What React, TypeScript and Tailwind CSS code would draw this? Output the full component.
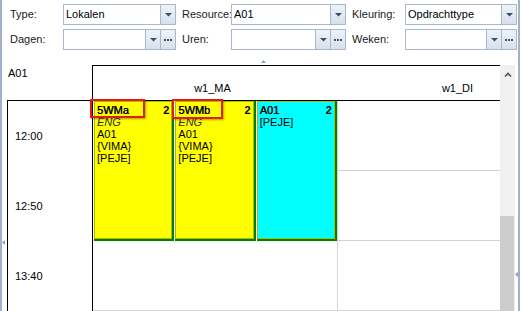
import React from "react";

function Arrow() {
  return (
    <svg width="7" height="4" viewBox="0 0 7 4">
      <polygon points="0,0 7,0 3.5,3.5" fill="#3f4e66" />
    </svg>
  );
}

function Dots() {
  return (
    <svg width="8" height="2" viewBox="0 0 8 2">
      <rect x="0" y="0" width="2" height="2" fill="#44536a" />
      <rect x="3" y="0" width="2" height="2" fill="#44536a" />
      <rect x="6" y="0" width="2" height="2" fill="#44536a" />
    </svg>
  );
}

function Btn({ children }: { children: React.ReactNode }) {
  return (
    <div className="w-[15px] h-full shrink-0 border-l border-[#a9b8cc] bg-gradient-to-b from-[#eef3f9] to-[#d6e0ec] flex items-center justify-center">
      {children}
    </div>
  );
}

function Combo({ w, value, dots }: { w: string; value?: string; dots?: boolean }) {
  return (
    <div className={"h-[21px] shrink-0 border border-[#a9b8cc] bg-white flex " + w}>
      <div className="flex-1 min-w-0 pl-[2px] leading-[19px] whitespace-nowrap overflow-hidden">{value}</div>
      <Btn>
        <Arrow />
      </Btn>
      {dots && (
        <Btn>
          <Dots />
        </Btn>
      )}
    </div>
  );
}

function Label({ w, text }: { w: string; text: string }) {
  return <div className={"shrink-0 leading-[21px] text-[#1a1a1a] " + w}>{text}</div>;
}

function Card({
  bg,
  title,
  lines,
}: {
  bg: string;
  title: string;
  lines: { t: string; i?: boolean }[];
}) {
  return (
    <div className="flex-1 min-w-0 h-full pl-[1px] bg-white">
      <div className="h-full border-r-2 border-b-2 border-[#008000]">
        <div className={"h-full border border-[#aabb00] px-[2px] pt-[2px] leading-[12px] " + bg}>
          <div className="flex justify-between">
            <span className="[text-shadow:0.3px_0_0_#000]">{title}</span>
            <span className="font-bold">2</span>
          </div>
          {lines.map((l, k) => (
            <div key={k} className={l.i ? "italic text-[#333333]" : ""}>
              {l.t}
            </div>
          ))}
        </div>
      </div>
    </div>
  );
}

export default function App() {
  const yellowLines = [{ t: "ENG", i: true }, { t: "A01" }, { t: "{VIMA}" }, { t: "[PEJE]" }];
  return (
    <div className="relative w-[522px] h-[311px] bg-white overflow-hidden font-['Liberation_Sans',Arial,sans-serif] text-[11px] text-black flex">
      <div className="w-[2px] h-full shrink-0 bg-[#9fb1cc]" />
      <div className="w-[516px] shrink-0 flex flex-col">
        {/* filters */}
        <div className="h-[55px] shrink-0 pt-[4px] pl-[8px] flex flex-col gap-[4px]">
          <div className="flex items-center">
            <Label w="w-[53px]" text="Type:" />
            <Combo w="w-[113px]" value="Lokalen" />
            <div className="w-[6px] shrink-0" />
            <Label w="w-[49px]" text="Resource:" />
            <Combo w="w-[115px]" value="A01" />
            <div className="w-[6px] shrink-0" />
            <Label w="w-[53px]" text="Kleuring:" />
            <Combo w="w-[112px]" value="Opdrachttype" />
          </div>
          <div className="flex items-center">
            <Label w="w-[53px]" text="Dagen:" />
            <Combo w="w-[113px]" dots />
            <div className="w-[6px] shrink-0" />
            <Label w="w-[49px]" text="Uren:" />
            <Combo w="w-[115px]" dots />
            <div className="w-[6px] shrink-0" />
            <Label w="w-[53px]" text="Weken:" />
            <Combo w="w-[112px]" dots />
          </div>
        </div>
        {/* splitter */}
        <div className="h-[10px] shrink-0 pl-[259px] pt-[5px]">
          <svg width="5" height="3" viewBox="0 0 5 3" className="block">
            <polygon points="0,3 5,3 2.5,0" fill="#8ea2bf" />
          </svg>
        </div>
        {/* schedule */}
        <div className="flex flex-1 min-h-0">
          <div className="w-[90px] shrink-0 flex flex-col">
            <div className="h-[35px] shrink-0 pl-[6px] pt-[2px] leading-[13px]">A01</div>
            <div className="ml-[5px] flex-1 border-l border-t border-black flex flex-col">
              {["12:00", "12:50", "13:40"].map((t) => (
                <div key={t} className="h-[70px] shrink-0 flex items-center pl-[7px]">
                  {t}
                </div>
              ))}
            </div>
          </div>
          <div className="w-[408px] shrink-0 border-l border-black flex flex-col overflow-hidden">
            <div className="h-[36px] shrink-0 border-t border-b border-black flex overflow-hidden">
              <div className="w-[245px] shrink-0 flex items-end justify-center pb-[5px] pr-[6px] leading-[13px]">
                w1_MA
              </div>
              <div className="w-[245px] shrink-0 flex items-end justify-center pb-[5px] pr-[6px] leading-[13px]">
                w1_DI
              </div>
            </div>
            <div className="flex flex-1 min-h-0 overflow-hidden">
              <div className="w-[245px] shrink-0 border-r border-[#d3d3d3] flex flex-col">
                <div className="h-[140px] shrink-0 flex">
                  <Card bg="bg-[#ffff00]" title="5WMa" lines={yellowLines} />
                  <Card bg="bg-[#ffff00]" title="5WMb" lines={yellowLines} />
                  <Card bg="bg-[#00ffff]" title="A01" lines={[{ t: "[PEJE]" }]} />
                </div>
                <div className="h-[70px] shrink-0 border-b border-[#d3d3d3]" />
              </div>
              <div className="w-[245px] shrink-0 border-r border-[#d3d3d3] flex flex-col">
                <div className="h-[70px] shrink-0 border-b border-[#d3d3d3]" />
                <div className="h-[70px] shrink-0 border-b border-[#d3d3d3]" />
                <div className="h-[70px] shrink-0 border-b border-[#d3d3d3]" />
              </div>
            </div>
          </div>
          <div className="w-[15px] shrink-0 bg-[#f0f0f0] flex flex-col items-center">
            <div className="pt-[7px]">
              <svg width="8" height="5" viewBox="0 0 8 5" className="block">
                <polyline points="1,4.5 4,1.5 7,4.5" fill="none" stroke="#555555" strokeWidth="1.6" />
              </svg>
            </div>
            <div className="mt-auto w-[14px] h-[95px] bg-[#cdcdcd] mr-[1px]" />
          </div>
        </div>
      </div>
      <div className="w-[2px] h-full shrink-0 bg-[#9fb1cc]" />
      <div className="w-[2px] shrink-0" />

      {/* splitter grips */}
      <svg width="3" height="5" viewBox="0 0 3 5" className="absolute left-[2px] top-[240px]">
        <polygon points="3,0 3,5 0,2.5" fill="#8ea2bf" />
      </svg>
      <svg width="3" height="5" viewBox="0 0 3 5" className="absolute left-[515px] top-[272px]">
        <polygon points="3,0 3,5 0,2.5" fill="#8ea2bf" />
      </svg>

      {/* annotation boxes */}
      <div className="absolute left-[90px] top-[99px] w-[55px] h-[19px] border-2 border-[#e41b1b] shadow-[1px_1px_2px_rgba(0,0,0,0.35)]" />
      <div className="absolute left-[172px] top-[99px] w-[51px] h-[20px] border-2 border-[#e41b1b] shadow-[1px_1px_2px_rgba(0,0,0,0.35)]" />
    </div>
  );
}
